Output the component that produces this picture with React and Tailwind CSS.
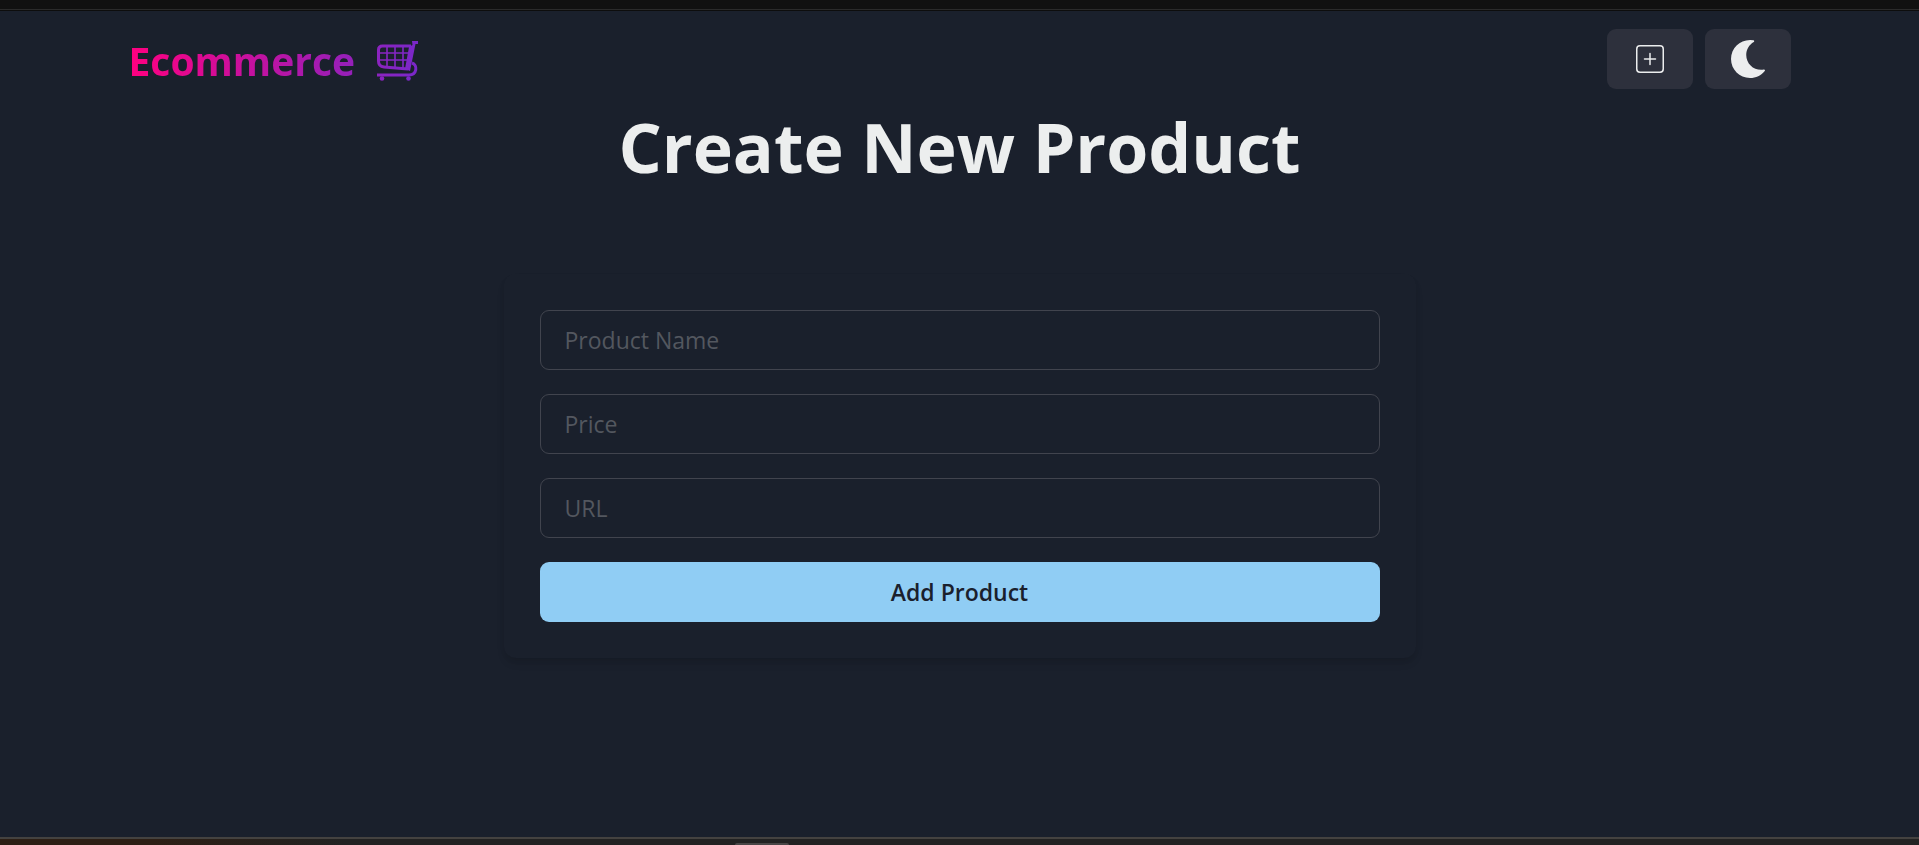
import React from "react";
import { FaMoon } from "react-icons/fa";

function CartIcon() {
  return (
    <svg viewBox="0 0 42 42" className="h-[42px] w-[42px]" fill="none" aria-hidden="true">
      <defs>
        <linearGradient id="cart" x1="0" y1="0" x2="42" y2="0" gradientUnits="userSpaceOnUse">
          <stop offset="0" stopColor="#8c23bf" />
          <stop offset="1" stopColor="#7928ca" />
        </linearGradient>
      </defs>
      <g stroke="url(#cart)">
        <path d="M34 6H5.500Q1.500 6 1.500 10V21Q1.500 26.500 7 27L31 29" strokeWidth="3" />
        <path d="M1.500 13H33M2 20H32M10 6V27M18 6V28M26 6V29" strokeWidth="1.600" />
        <path d="M35 23C41 25 40 35 32 35H0" strokeWidth="3" />
      </g>
      <path d="M35 1H41V4H38.500L33 31L28 29L32 7L35.500 5Z" fill="url(#cart)" />
      <circle cx="5" cy="38.500" r="2.300" fill="#8b23c0" />
      <circle cx="31.500" cy="38.500" r="2.300" fill="#7c27c8" />
    </svg>
  );
}

function SquarePlusIcon() {
  return (
    <svg viewBox="0 0 28 28" className="h-7 w-7" fill="none" stroke="currentColor" aria-hidden="true">
      <rect x="0.750" y="0.750" width="26.500" height="26.500" rx="3.200" strokeWidth="1.500" />
      <path d="M14 8.500V19.500M8.500 14H19.500" strokeWidth="1.500" strokeLinecap="round" />
    </svg>
  );
}

function IconButton({ label, children }) {
  return (
    <button
      type="button"
      aria-label={label}
      className="flex h-[60px] w-[86px] items-center justify-center rounded-[9px] bg-[#2d303c] text-[#ecedee]"
    >
      {children}
    </button>
  );
}

function Field({ label, type = "text" }) {
  return (
    <input
      type={type}
      aria-label={label}
      placeholder={label}
      className="h-[60px] w-full rounded-[9px] border border-[#41444e] bg-transparent px-6 text-[23px] text-[#ecedee] outline-none placeholder:text-[#53575f]"
    />
  );
}

export default function App() {
  return (
    <div className="flex min-h-screen flex-col bg-[#1a202c] font-['Open_Sans','Noto_Sans',sans-serif]">
      <div className="h-[11px] border-b border-[#0d0d0d] bg-[#111111]">
        <div className="h-[10px] border-b border-[#2b2b2b]" />
      </div>

      <header className="mx-auto flex h-24 w-full max-w-[1710px] items-center justify-between px-6">
        <a href="/" className="flex items-center gap-[22px] pt-1">
          <span className="bg-linear-to-r/srgb from-[#ff0080] to-[#9420ba] bg-clip-text text-[39px] leading-[60px] font-bold text-transparent">
            Ecommerce
          </span>
          <CartIcon />
        </a>
        <nav className="flex gap-3">
          <IconButton label="Create product">
            <SquarePlusIcon />
          </IconButton>
          <IconButton label="Toggle color mode">
            <FaMoon className="h-[38px] w-[38px]" />
          </IconButton>
        </nav>
      </header>

      <main className="mx-auto flex w-full max-w-[960px] grow flex-col gap-[87px] px-6">
        <h1 className="text-center text-[68px] leading-20 font-bold whitespace-nowrap text-[#eceeee]">
          Create New Product
        </h1>
        <form className="flex flex-col gap-6 rounded-xl p-9 shadow-[0_6px_9px_-1px_rgba(0,0,0,0.1),0_3px_6px_-1px_rgba(0,0,0,0.06)]">
          <Field label="Product Name" />
          <Field label="Price" />
          <Field label="URL" />
          <button type="button" className="h-[60px] rounded-[9px] bg-[#90cdf4] text-[23px] font-semibold text-[#1a202c]">
            Add Product
          </button>
        </form>
      </main>

      <footer className="h-2 border-t-2 border-[#444240] bg-linear-to-r/srgb from-[#2d1f15] from-8% to-[#222222] to-18%">
        <div className="ml-[38.300%] h-1.5 w-[54px] pt-1">
          <div className="h-0.5 rounded-t-sm bg-[#484646]" />
        </div>
      </footer>
    </div>
  );
}
